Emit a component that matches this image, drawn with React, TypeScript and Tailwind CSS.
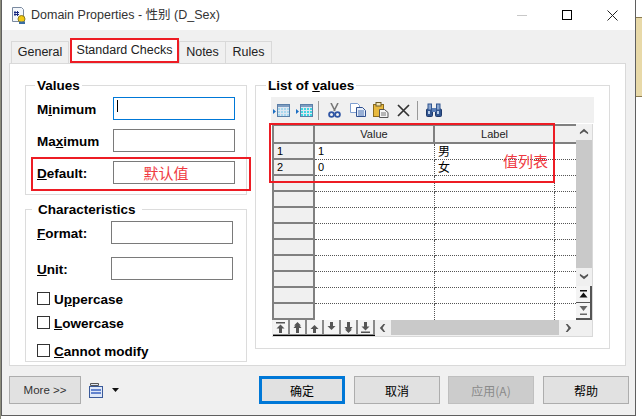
import type { ReactNode } from "react";

const ui = "font-['Liberation_Sans','Noto_Sans_CJK_SC',sans-serif]";
const cjk = "font-['Noto_Sans_CJK_SC',sans-serif]";

function TableIcon({ cyan }: { cyan?: boolean }) {
  const cells = [];
  for (let r = 0; r < 3; r++) {
    for (let c = 0; c < 4; c++) {
      cells.push(<rect key={`${r}-${c}`} x={5 + c * 3} y={5 + r * 3} width="2" height="2" fill={cyan ? "#3fd5e0" : "#a9d8ee"} />);
    }
  }
  return (
    <svg width="17" height="15" viewBox="0 0 17 15">
      <rect x="4.5" y="1.5" width="12" height="12" fill="#dfe7f1" stroke="#5b7fa8" />
      <rect x="5" y="2" width="11" height="2" fill="#7d9cc0" />
      {cells}
      <path d="M0 6l3 2.5L0 11z" fill="#1c6fc4" />
    </svg>
  );
}

function CutIcon() {
  return (
    <svg width="13" height="15" viewBox="0 0 13 15">
      <path d="M3 0l4 8M10 0L6 8" stroke="#777" strokeWidth="1.6" fill="none" />
      <circle cx="3.5" cy="11.5" r="2.4" fill="none" stroke="#2f55a4" strokeWidth="1.8" />
      <circle cx="9.5" cy="11.5" r="2.4" fill="none" stroke="#2f55a4" strokeWidth="1.8" />
    </svg>
  );
}

function CopyIcon() {
  return (
    <svg width="16" height="14" viewBox="0 0 16 14">
      <path d="M.5.5h7l2 2v7H.5z" fill="#fff" stroke="#7f9fd0" />
      <path d="M6.5 4.5h6l3 3v6h-9z" fill="#e4edf9" stroke="#2f4f8f" />
      <path d="M8 8h6M8 10h6M8 12h6" stroke="#4a70b0" />
    </svg>
  );
}

function PasteIcon() {
  return (
    <svg width="16" height="16" viewBox="0 0 16 16">
      <rect x=".5" y="2.5" width="10" height="12" fill="#e8b93e" stroke="#8a6a1c" />
      <rect x="3" y="0.5" width="5" height="3.5" fill="#f3e6b5" stroke="#6b5a2a" />
      <path d="M6.5 7.5h5l3.5 3v5H6.5z" fill="#f4f4f4" stroke="#555" />
      <path d="M8 11h5M8 13h5" stroke="#777" />
    </svg>
  );
}

function DeleteIcon() {
  return (
    <svg width="13" height="13" viewBox="0 0 13 13">
      <path d="M1 1l11 11M12 1L1 12" stroke="#333" strokeWidth="1.7" fill="none" />
    </svg>
  );
}

function FindIcon() {
  return (
    <svg width="16" height="14" viewBox="0 0 16 14">
      <rect x="0.5" y="6" width="6" height="7.5" rx="1" fill="#31558f" stroke="#1f3a6b" />
      <rect x="9.5" y="6" width="6" height="7.5" rx="1" fill="#31558f" stroke="#1f3a6b" />
      <rect x="2" y="1" width="3.5" height="6" fill="#8aa6cf" stroke="#31558f" />
      <rect x="10.5" y="1" width="3.5" height="6" fill="#8aa6cf" stroke="#31558f" />
      <rect x="6" y="5" width="4" height="4" fill="#5a7db5" />
      <rect x="2" y="8" width="2" height="3" fill="#b8cdea" />
      <rect x="11" y="8" width="2" height="3" fill="#b8cdea" />
    </svg>
  );
}

function NavIcon({ d }: { d: string }) {
  return (
    <svg width="11" height="11" viewBox="0 0 11 11">
      <path d={d} fill="#555" />
    </svg>
  );
}

const navPaths = [
  "M1 0h9v1.5H1zM5.5 2.5L9.5 6.5H7V11H4V6.5H1.5z",
  "M5.5 0L9 3.5H7.5L9.5 6H7V11H4V6H1.5L3.5 3.5H2z",
  "M5.5 3L9.5 7H7V11H4V7H1.5z",
  "M4 0h3v4h2.5L5.5 8L1.5 4H4z",
  "M4 0h3v5h2.5L7.5 7.5H9L5.5 11L2 7.5h1.5L1.5 5H4z",
  "M4 0h3v4.5h2.5l-4 4-4-4H4zM1 9.5h9V11H1z",
];

function Chevron({ dir }: { dir: "up" | "down" | "left" | "right" }) {
  const paths = {
    up: "M1 6l4.5-4L10 6V8L5.5 5 1 8z",
    down: "M1 2l4.5 3L10 2v2L5.5 8 1 4z",
    left: "M6 1L2 5.5 6 10H8L5 5.5 8 1z",
    right: "M3 1h2l4 4.5L5 10H3l3-4.5z",
  };
  return (
    <svg width="10" height="10" viewBox="0 0 11 11">
      <path d={paths[dir]} fill="#555" />
    </svg>
  );
}

function Tab({ children, className }: { children: ReactNode; className?: string }) {
  return (
    <div className={`flex h-[22px] items-center justify-center border border-b-0 border-[#d9d9d9] bg-[#f0f0f0] text-[12.5px] text-[#222] ${className ?? ""}`}>
      {children}
    </div>
  );
}

function Group({ title, className, legendClass, children }: { title: ReactNode; className: string; legendClass: string; children: ReactNode }) {
  return (
    <fieldset className={`border border-[#dcdcdc] ${className}`}>
      <legend className={`h-[14px] pt-px text-[13.5px] leading-[14px] font-bold text-black ${legendClass}`}>{title}</legend>
      {children}
    </fieldset>
  );
}

function Field({ label, labelWidth, focused, children, className }: { label: ReactNode; labelWidth: string; focused?: boolean; children?: ReactNode; className?: string }) {
  return (
    <div className={`flex h-[23px] items-center ${className ?? ""}`}>
      <div className={`pt-[3px] text-[13.5px] font-bold text-black ${labelWidth}`}>{label}</div>
      <div className={`flex h-[23px] w-[122px] items-center border bg-white ${focused ? "border-[#0078d7]" : "border-[#7a7a7a]"}`}>{children}</div>
    </div>
  );
}

function Check({ label, className }: { label: ReactNode; className: string }) {
  return (
    <div className={`flex h-[13px] items-center ${className}`}>
      <div className="h-[13px] w-[13px] border border-[#333] bg-white" />
      <div className="ml-[4px] pt-[4px] text-[13.5px] font-bold whitespace-nowrap text-black">{label}</div>
    </div>
  );
}

function FooterButton({ children, className }: { children: ReactNode; className: string }) {
  return <div className={`flex h-[28px] items-center justify-center pt-px text-[12px] ${className}`}>{children}</div>;
}

function GridRow({ n, value, label, last }: { n?: string; value?: string; label?: string; last?: boolean }) {
  return (
    <div className="flex h-[16px]">
      <div className="flex h-[16px] w-[43px] items-center border-x-2 border-b-2 border-[#808080] bg-[#f0f0f0] pl-[3px] text-[11px] text-black">{n}</div>
      <div className={`flex w-[120px] items-center border-r border-dotted border-r-[#555] pl-[3px] text-[11px] text-black ${last ? "" : "border-b border-b-[#555]"}`}>{value}</div>
      <div className={`flex w-[120px] items-center border-r border-dotted border-r-[#555] pb-[2px] pl-[3px] text-[12px] leading-[12px] text-black ${cjk} ${last ? "" : "border-b border-b-[#555]"}`}>{label}</div>
      <div className={`w-[21px] border-dotted ${last ? "" : "border-b border-b-[#555]"}`} />
    </div>
  );
}

const rows = [
  { n: "1", value: "1", label: "男" },
  { n: "2", value: "0", label: "女" },
  {}, {}, {}, {}, {}, {}, {}, {},
];

export default function App() {
  return (
    <div className={`relative flex h-[419px] w-[642px] overflow-hidden bg-white ${ui}`}>
      <div className="w-px bg-[#8c8c7c]" />
      <div className="flex h-[416px] w-[635px] flex-col border-r border-b border-l border-[#5f5f5f] bg-[#f0f0f0]">
        <div className="flex h-[30px] shrink-0 items-center bg-white">
          <svg className="ml-[9px]" width="16" height="17" viewBox="0 0 16 17">
            <path d="M1.5.5h9l2 2v12h-11z" fill="#f4f7fb" stroke="#7a8aa0" />
            <path d="M4 4v5M6.5 4v5M3 5.5h5M3 7.500h5" stroke="#1a2a80" />
            <circle cx="10.5" cy="12" r="3.5" fill="#f2c811" stroke="#8a7a20" />
            <path d="M8 14.5h6V17H8z" fill="#3a6ea5" />
          </svg>
          <div className="ml-[4px] text-[12.5px] text-[#333]">Domain Properties - 性别 (D_Sex)</div>
          <div className="ml-auto h-px w-[10px] bg-[#c8c8c8]" />
          <div className="ml-[35px] h-[10px] w-[10px] border border-black" />
          <svg className="mr-[17px] ml-[35px]" width="11" height="11" viewBox="0 0 11 11">
            <path d="M.5.5l10 10M10.5.5l-10 10" stroke="#222" fill="none" />
          </svg>
        </div>

        <div className="flex h-[33px] shrink-0 items-end pl-[9px]">
          <Tab className="w-[58px]">General</Tab>
          <div className="ml-[1px] flex h-[25px] w-[109px] items-center justify-center border-2 border-[#ed1c24] bg-white pb-[1px] text-[12.5px] text-[#222]">
            Standard Checks
          </div>
          <Tab className="w-[47px]">Notes</Tab>
          <Tab className="w-[46px] border-l-0">Rules</Tab>
        </div>

        <div className="ml-[7px] flex h-[303px] w-[617px] shrink-0 gap-[8px] border border-[#d9d9d9] bg-white pt-[14px] pl-[15px]">
          <div className="flex w-[222px] flex-col">
            <Group title="Values" className="pt-[5px] pb-[10px] pl-[11px]" legendClass="-ml-[2px] px-[2px]">
              <Field label={<>M<u>i</u>nimum</>} labelWidth="w-[76px]" focused>
                <div className="mb-[5px] ml-[3px] h-[12px] w-px bg-black" />
              </Field>
              <Field label={<>Ma<u>x</u>imum</>} labelWidth="w-[76px]" className="mt-[9px]" />
              <Field label={<><u>D</u>efault:</>} labelWidth="w-[76px]" className="mt-[9px]">
                <span className={`w-full pt-px pr-[16px] text-center text-[15px] text-[#ef3a42] ${cjk}`}>默认值</span>
              </Field>
            </Group>
            <Group title="Characteristics" className="mt-[7px] h-[160px] pt-[5px] pl-[11px]" legendClass="-ml-[5px] px-[6px]">
              <Field label={<><u>F</u>ormat:</>} labelWidth="w-[74px]" />
              <Field label={<><u>U</u>nit:</>} labelWidth="w-[74px]" className="mt-[13px]" />
              <Check label={<>U<u>p</u>percase</>} className="mt-[12px]" />
              <Check label={<><u>L</u>owercase</>} className="mt-[11px]" />
              <Check label={<><u>C</u>annot modify</>} className="mt-[15px]" />
            </Group>
          </div>

          <Group title={<>List of <u>v</u>alues</>} className="h-[271px] w-[355px] pt-[5px] pl-[15px]" legendClass="-ml-[5px] px-[2px]">
            <div className="flex h-[26px] w-[323px] items-center bg-[#f0f0f0] pl-[2px]">
              <TableIcon />
              <div className="ml-[6px]"><TableIcon cyan /></div>
              <div className="ml-[5px] h-[19px] w-px bg-[#999]" />
              <div className="ml-[9px]"><CutIcon /></div>
              <div className="ml-[9px]"><CopyIcon /></div>
              <div className="ml-[7px]"><PasteIcon /></div>
              <div className="ml-[8px]"><DeleteIcon /></div>
              <div className="ml-[7px] h-[19px] w-px bg-[#999]" />
              <div className="ml-[8px]"><FindIcon /></div>
            </div>

            <div className="mt-px ml-px flex h-[213px] w-[321px] flex-col border-r border-b border-[#d9d9d9]">
              <div className="flex h-[196px]">
                <div className="w-[304px]">
                  <div className="flex h-[20px] border-t-2 border-b-2 border-[#808080] bg-[#f0f0f0] text-[11px] text-[#222]">
                    <div className="w-[43px] border-x-2 border-[#808080]" />
                    <div className="flex w-[120px] items-center justify-center border-r-2 border-[#808080] pt-px">Value</div>
                    <div className="flex w-[120px] items-center justify-center border-r border-[#bbb] pt-px">Label</div>
                  </div>
                  {rows.map((row, i) => (
                    <GridRow key={i} n={row.n} value={row.value} label={row.label} />
                  ))}
                  <GridRow last />
                </div>
                <div className="flex w-[16px] flex-col bg-[#f0f0f0]">
                  <div className="flex h-[16px] items-center justify-center"><Chevron dir="up" /></div>
                  <div className="h-[128px] bg-[#c9c9c9]" />
                  <div className="flex h-[18px] items-center justify-center"><Chevron dir="down" /></div>
                  <div className="flex h-[17px] items-center justify-center border-r-2 border-b border-[#555] bg-[#f4f4f4]">
                    <svg width="9" height="9" viewBox="0 0 9 9"><path d="M1 0h7v1.5H1zM4.500 2.500L8.500 7.500H.5z" fill="#111" /></svg>
                  </div>
                  <div className="flex h-[17px] items-center justify-center border-r-2 border-b-2 border-[#555] bg-[#f4f4f4]">
                    <svg width="9" height="11" viewBox="0 0 9 11"><path d="M.5 1h8L4.500 6zM1 8.500h7V10H1z" fill="#666" /></svg>
                  </div>
                </div>
              </div>
              <div className="flex h-[16px] bg-[#f0f0f0]">
                <div className="ml-px flex border-b border-black">
                  {navPaths.map((d, i) => (
                    <div key={i} className="flex h-[15px] w-[17px] items-center justify-center border-r-2 border-b border-[#8a8a8a] bg-[#f4f4f4]">
                      <NavIcon d={d} />
                    </div>
                  ))}
                </div>
                <div className="flex w-[16px] items-center justify-center"><Chevron dir="left" /></div>
                <div className="h-[15px] w-[168px] bg-[#c9c9c9]" />
                <div className="flex w-[17px] items-center justify-center"><Chevron dir="right" /></div>
              </div>
            </div>
          </Group>
        </div>

        <div className="flex items-center pt-[10px] pr-[6px] pl-[7px]">
          <FooterButton className="w-[72px] border border-[#adadad] bg-[#e1e1e1] !text-[11.5px] text-[#333]">More &gt;&gt;</FooterButton>
          <svg className="ml-[8px]" width="15" height="15" viewBox="0 0 15 15">
            <path d="M1.500.5h8v2h-8z" fill="#dfe6f2" stroke="#555" />
            <rect x=".5" y="3.500" width="13" height="11" fill="#dfe8f8" stroke="#3a5a9a" />
            <path d="M2 7h10M2 10h10" stroke="#3a62c0" strokeWidth="1.500" />
          </svg>
          <svg className="ml-[8px]" width="7" height="4" viewBox="0 0 7 4"><path d="M0 0h7L3.500 4z" fill="#111" /></svg>
          <FooterButton className={`ml-auto w-[86px] border-[3px] border-[#0078d7] bg-[#e1e1e1] text-black ${cjk}`}>确定</FooterButton>
          <FooterButton className={`ml-[9px] w-[86px] border border-[#adadad] bg-[#e1e1e1] text-black ${cjk}`}>取消</FooterButton>
          <FooterButton className={`ml-[8px] w-[86px] border border-[#bfbfbf] bg-[#cccccc] text-[#8a8a8a] ${cjk}`}>应用(A)</FooterButton>
          <FooterButton className={`ml-[9px] w-[86px] border border-[#adadad] bg-[#e1e1e1] text-black ${cjk}`}>帮助</FooterButton>
        </div>
      </div>
      <div className="mt-[17px] h-[80px] w-[6px] border-y border-[#8a7a50] bg-[#e8d9a8]" />

      <div className="absolute top-[157px] left-[31px] h-[34px] w-[220px] border-2 border-[#ed1c24]" />
      <div className="absolute top-[123px] left-[269px] h-[60px] w-[286px] border-2 border-[#ed1c24]" />
      <div className={`absolute top-[151px] left-[503px] text-[15px] leading-[20px] text-[#ef3a42] ${cjk}`}>值列表</div>
    </div>
  );
}
